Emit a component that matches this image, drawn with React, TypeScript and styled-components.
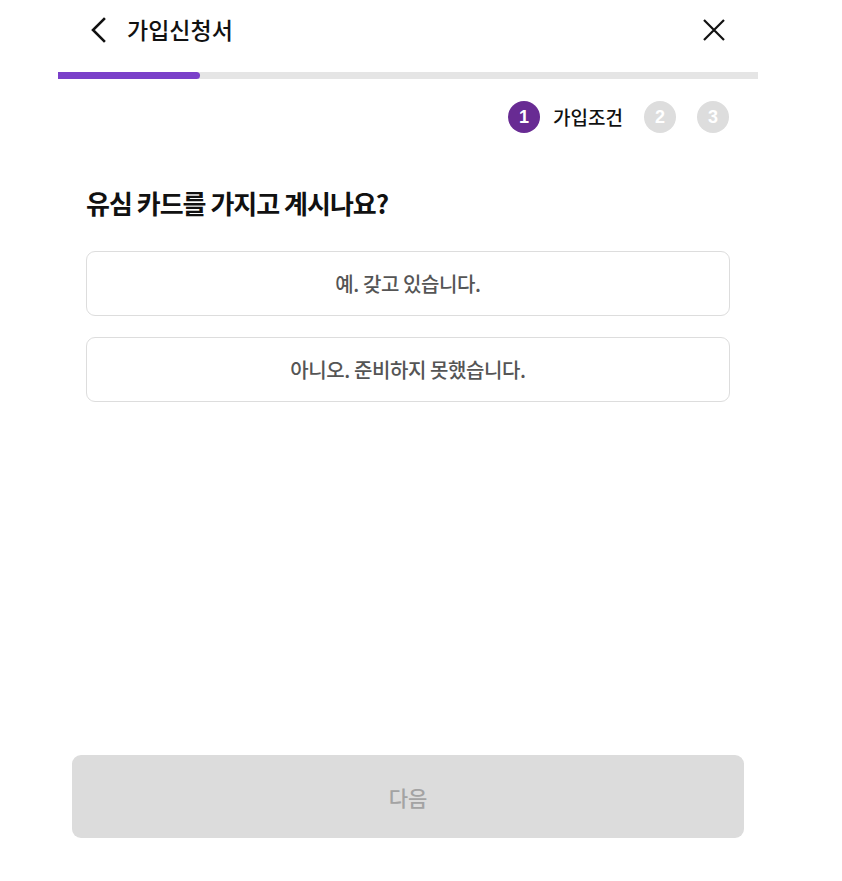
import React from "react";
import styled, { createGlobalStyle } from "styled-components";

const Global = createGlobalStyle`
  html, body { margin: 0; padding: 0; background: #fff; }
  body { font-family: "Noto Sans CJK KR", "Noto Sans", sans-serif; color: #111; }
  * { box-sizing: border-box; }
`;

const Page = styled.div`
  width: 700px;
  margin-left: 58px;
  height: 881px;
  display: flex;
  flex-direction: column;
`;

const Header = styled.header`
  height: 60px;
  display: flex;
  align-items: center;
  padding: 0 32px 0 30px;
`;

const IconButton = styled.button`
  border: 0;
  background: none;
  padding: 0;
  width: 24px;
  height: 24px;
  display: flex;
  align-items: center;
  justify-content: center;
  cursor: pointer;
`;

const Title = styled.h1`
  margin: -3px 0 0 15px;
  font-size: 23px;
  font-weight: 500;
  line-height: 30px;
  color: #111;
  flex: 1;
`;

const Track = styled.div`
  margin-top: 12px;
  height: 7px;
  background: #e5e5e5;
`;

const Fill = styled.div`
  height: 100%;
  background: #7a40c9;
  border-radius: 0 4px 4px 0;
`;

const Steps = styled.div`
  display: flex;
  justify-content: flex-end;
  align-items: center;
  padding: 22px 29px 0 0;
  gap: 21px;
`;

const StepItem = styled.div`
  display: flex;
  align-items: center;
  gap: 13px;
`;

const Circle = styled.span<{ $active?: boolean }>`
  width: 32px;
  height: 32px;
  border-radius: 50%;
  background: ${(p) => (p.$active ? "#682b93" : "#dddddd")};
  color: #fff;
  font-family: "Liberation Sans", Arial, sans-serif;
  font-weight: 700;
  font-size: 18px;
  display: flex;
  align-items: center;
  justify-content: center;
`;

const StepLabel = styled.span`
  font-size: 19px;
  font-weight: 500;
  color: #111;
  margin-top: -2px;
`;

const Content = styled.main`
  padding: 52px 28px 0;
  display: flex;
  flex-direction: column;
  flex: 1;
`;

const Question = styled.h2`
  margin: 0 0 30px;
  font-size: 26px;
  font-weight: 700;
  letter-spacing: -1px;
  line-height: 36px;
  color: #111;
`;

const Options = styled.div`
  display: flex;
  flex-direction: column;
  gap: 21px;
`;

const Option = styled.button`
  height: 65px;
  width: 100%;
  border: 1px solid #dddddd;
  border-radius: 9px;
  background: #fff;
  font-family: inherit;
  font-size: 20px;
  font-weight: 500;
  letter-spacing: -0.4px;
  color: #555;
  cursor: pointer;
`;

const Footer = styled.div`
  padding: 0 14px 43px;
`;

const NextButton = styled.button`
  width: 100%;
  height: 83px;
  border: 0;
  border-radius: 9px;
  background: #dcdcdc;
  color: #a3a3a3;
  font-family: inherit;
  font-size: 21px;
  font-weight: 500;
`;

export default function App() {
  return (
    <>
      <Global />
      <Page>
        <Header>
          <IconButton aria-label="back">
            <svg width="24" height="26" viewBox="0 0 24 26" fill="none">
              <path d="M16 2 L5 13 L16 24" stroke="#111" strokeWidth="2.6" strokeLinecap="square" />
            </svg>
          </IconButton>
          <Title>가입신청서</Title>
          <IconButton aria-label="close">
            <svg width="24" height="24" viewBox="0 0 24 24" fill="none">
              <path d="M2 2 L22 22 M22 2 L2 22" stroke="#111" strokeWidth="2.2" />
            </svg>
          </IconButton>
        </Header>
        <Track>
          <Fill style={{ width: `${(142 / 700) * 100}%` }} />
        </Track>
        <Steps>
          <StepItem>
            <Circle $active>1</Circle>
            <StepLabel>가입조건</StepLabel>
          </StepItem>
          <Circle>2</Circle>
          <Circle>3</Circle>
        </Steps>
        <Content>
          <Question>유심 카드를 가지고 계시나요?</Question>
          <Options>
            <Option>예. 갖고 있습니다.</Option>
            <Option>아니오. 준비하지 못했습니다.</Option>
          </Options>
        </Content>
        <Footer>
          <NextButton disabled>다음</NextButton>
        </Footer>
      </Page>
    </>
  );
}
